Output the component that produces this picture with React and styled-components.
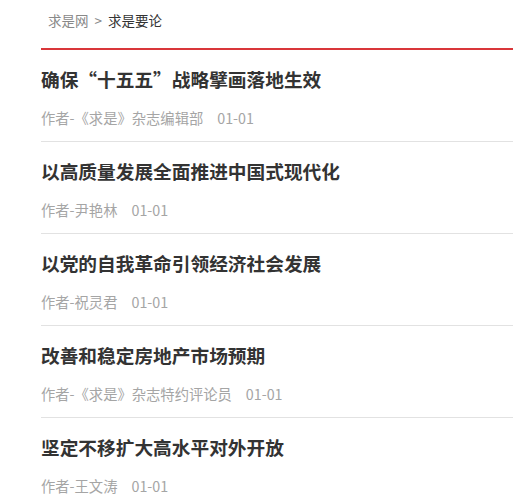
import React from "react";
import styled, { createGlobalStyle } from "styled-components";

const GlobalStyle = createGlobalStyle`
   body {
      margin: 0;
      background: #fff;
      font-family: "Microsoft YaHei", "Noto Sans CJK SC", "Noto Sans", sans-serif;
   }
`;

const Page = styled.div`
   padding-left: 41px;
   overflow: hidden;
`;

const Crumbs = styled.div`
   height: 48px;
   display: flex;
   align-items: center;
   gap: 6px;
   padding: 0 0 8px 7px;
   box-sizing: border-box;
   font-size: 13.5px;
   color: #888;
`;

const CrumbLink = styled.a`
   color: ${(props) => (props.current ? "#333" : "#888")};
   text-decoration: none;
`;

const List = styled.ul`
   list-style: none;
   margin: 0;
   padding: 0;
   border-top: 2px solid #d9363a;
`;

const Item = styled.li`
   padding: 17px 0 13px;
   border-bottom: 1px solid #e2e2e2;
`;

const Title = styled.h3`
   margin: 0;
   font-size: 18.7px;
   line-height: 24px;
   font-weight: bold;
   color: #333;
`;

const Meta = styled.div`
   margin-top: 17px;
   font-size: 14.3px;
   line-height: 20px;
   color: #a5a5a5;
   display: flex;
   gap: 14px;
`;

const articles = [
   { title: "确保“十五五”战略擘画落地生效", author: "《求是》杂志编辑部", date: "01-01" },
   { title: "以高质量发展全面推进中国式现代化", author: "尹艳林", date: "01-01" },
   { title: "以党的自我革命引领经济社会发展", author: "祝灵君", date: "01-01" },
   { title: "改善和稳定房地产市场预期", author: "《求是》杂志特约评论员", date: "01-01" },
   { title: "坚定不移扩大高水平对外开放", author: "王文涛", date: "01-01" },
];

const App = () => {
   return (
      <Page>
         <GlobalStyle />
         <Crumbs>
            <CrumbLink>求是网</CrumbLink>
            <span>&gt;</span>
            <CrumbLink current>求是要论</CrumbLink>
         </Crumbs>
         <List>
            {articles.map((a) => (
               <Item key={a.title}>
                  <Title>{a.title}</Title>
                  <Meta>
                     <span>作者-{a.author}</span>
                     <span>{a.date}</span>
                  </Meta>
               </Item>
            ))}
         </List>
      </Page>
   );
};

export default App;
